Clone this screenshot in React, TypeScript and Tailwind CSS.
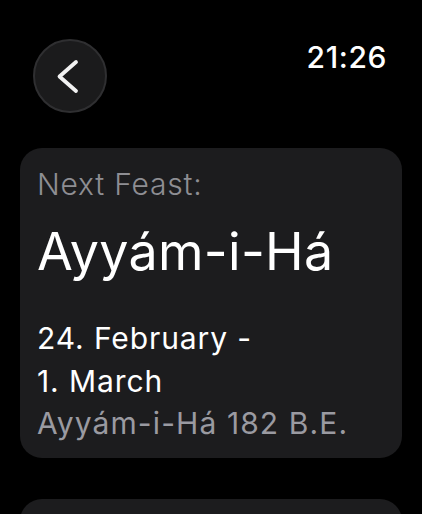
export default function App() {
  return (
    <div className="w-[422px] h-[514px] bg-black overflow-hidden font-['Inter',sans-serif] text-white">
      <div className="flex items-start justify-between pl-[33px] pr-[35px] pt-[39px]">
        <button className="w-[74px] h-[74px] rounded-full bg-[#1b1b1c] border-2 border-[#2f2f31] flex items-center justify-center">
          <svg width="74" height="74" viewBox="0 0 74 74" className="shrink-0 -m-[2px]">
            <path d="M43 23 L26.5 37.5 L43 52" fill="none" stroke="#f2f2f2" strokeWidth="3.8" strokeLinecap="round" strokeLinejoin="round" />
          </svg>
        </button>
        <span className="text-[30px] leading-[36px] font-medium tracking-[0.6px]">21:26</span>
      </div>

      <div className="mx-[20px] mt-[35px] rounded-[22px] bg-[#1c1c1e] pt-[18px] pb-[17px] px-[17px]">
        <div className="text-[30px] leading-[36px] text-[#8e8e93] font-light tracking-[0.8px]">Next Feast:</div>
        <div className="mt-[20px] text-[52px] leading-[60px] font-normal tracking-[0.3px]">Ayyám-i-Há</div>
        <div className="mt-[35px] text-[30px] leading-[43px] tracking-[0.9px]">
          24. February -<br />1. March
        </div>
        <div className="mt-[2px] text-[30px] leading-[36px] text-[#9a9aa1] tracking-[1.1px]">Ayyám-i-Há 182 B.E.</div>
      </div>

      <div className="mx-[20px] mt-[41px] h-[120px] rounded-[22px] bg-[#1c1c1e]" />
    </div>
  );
}
